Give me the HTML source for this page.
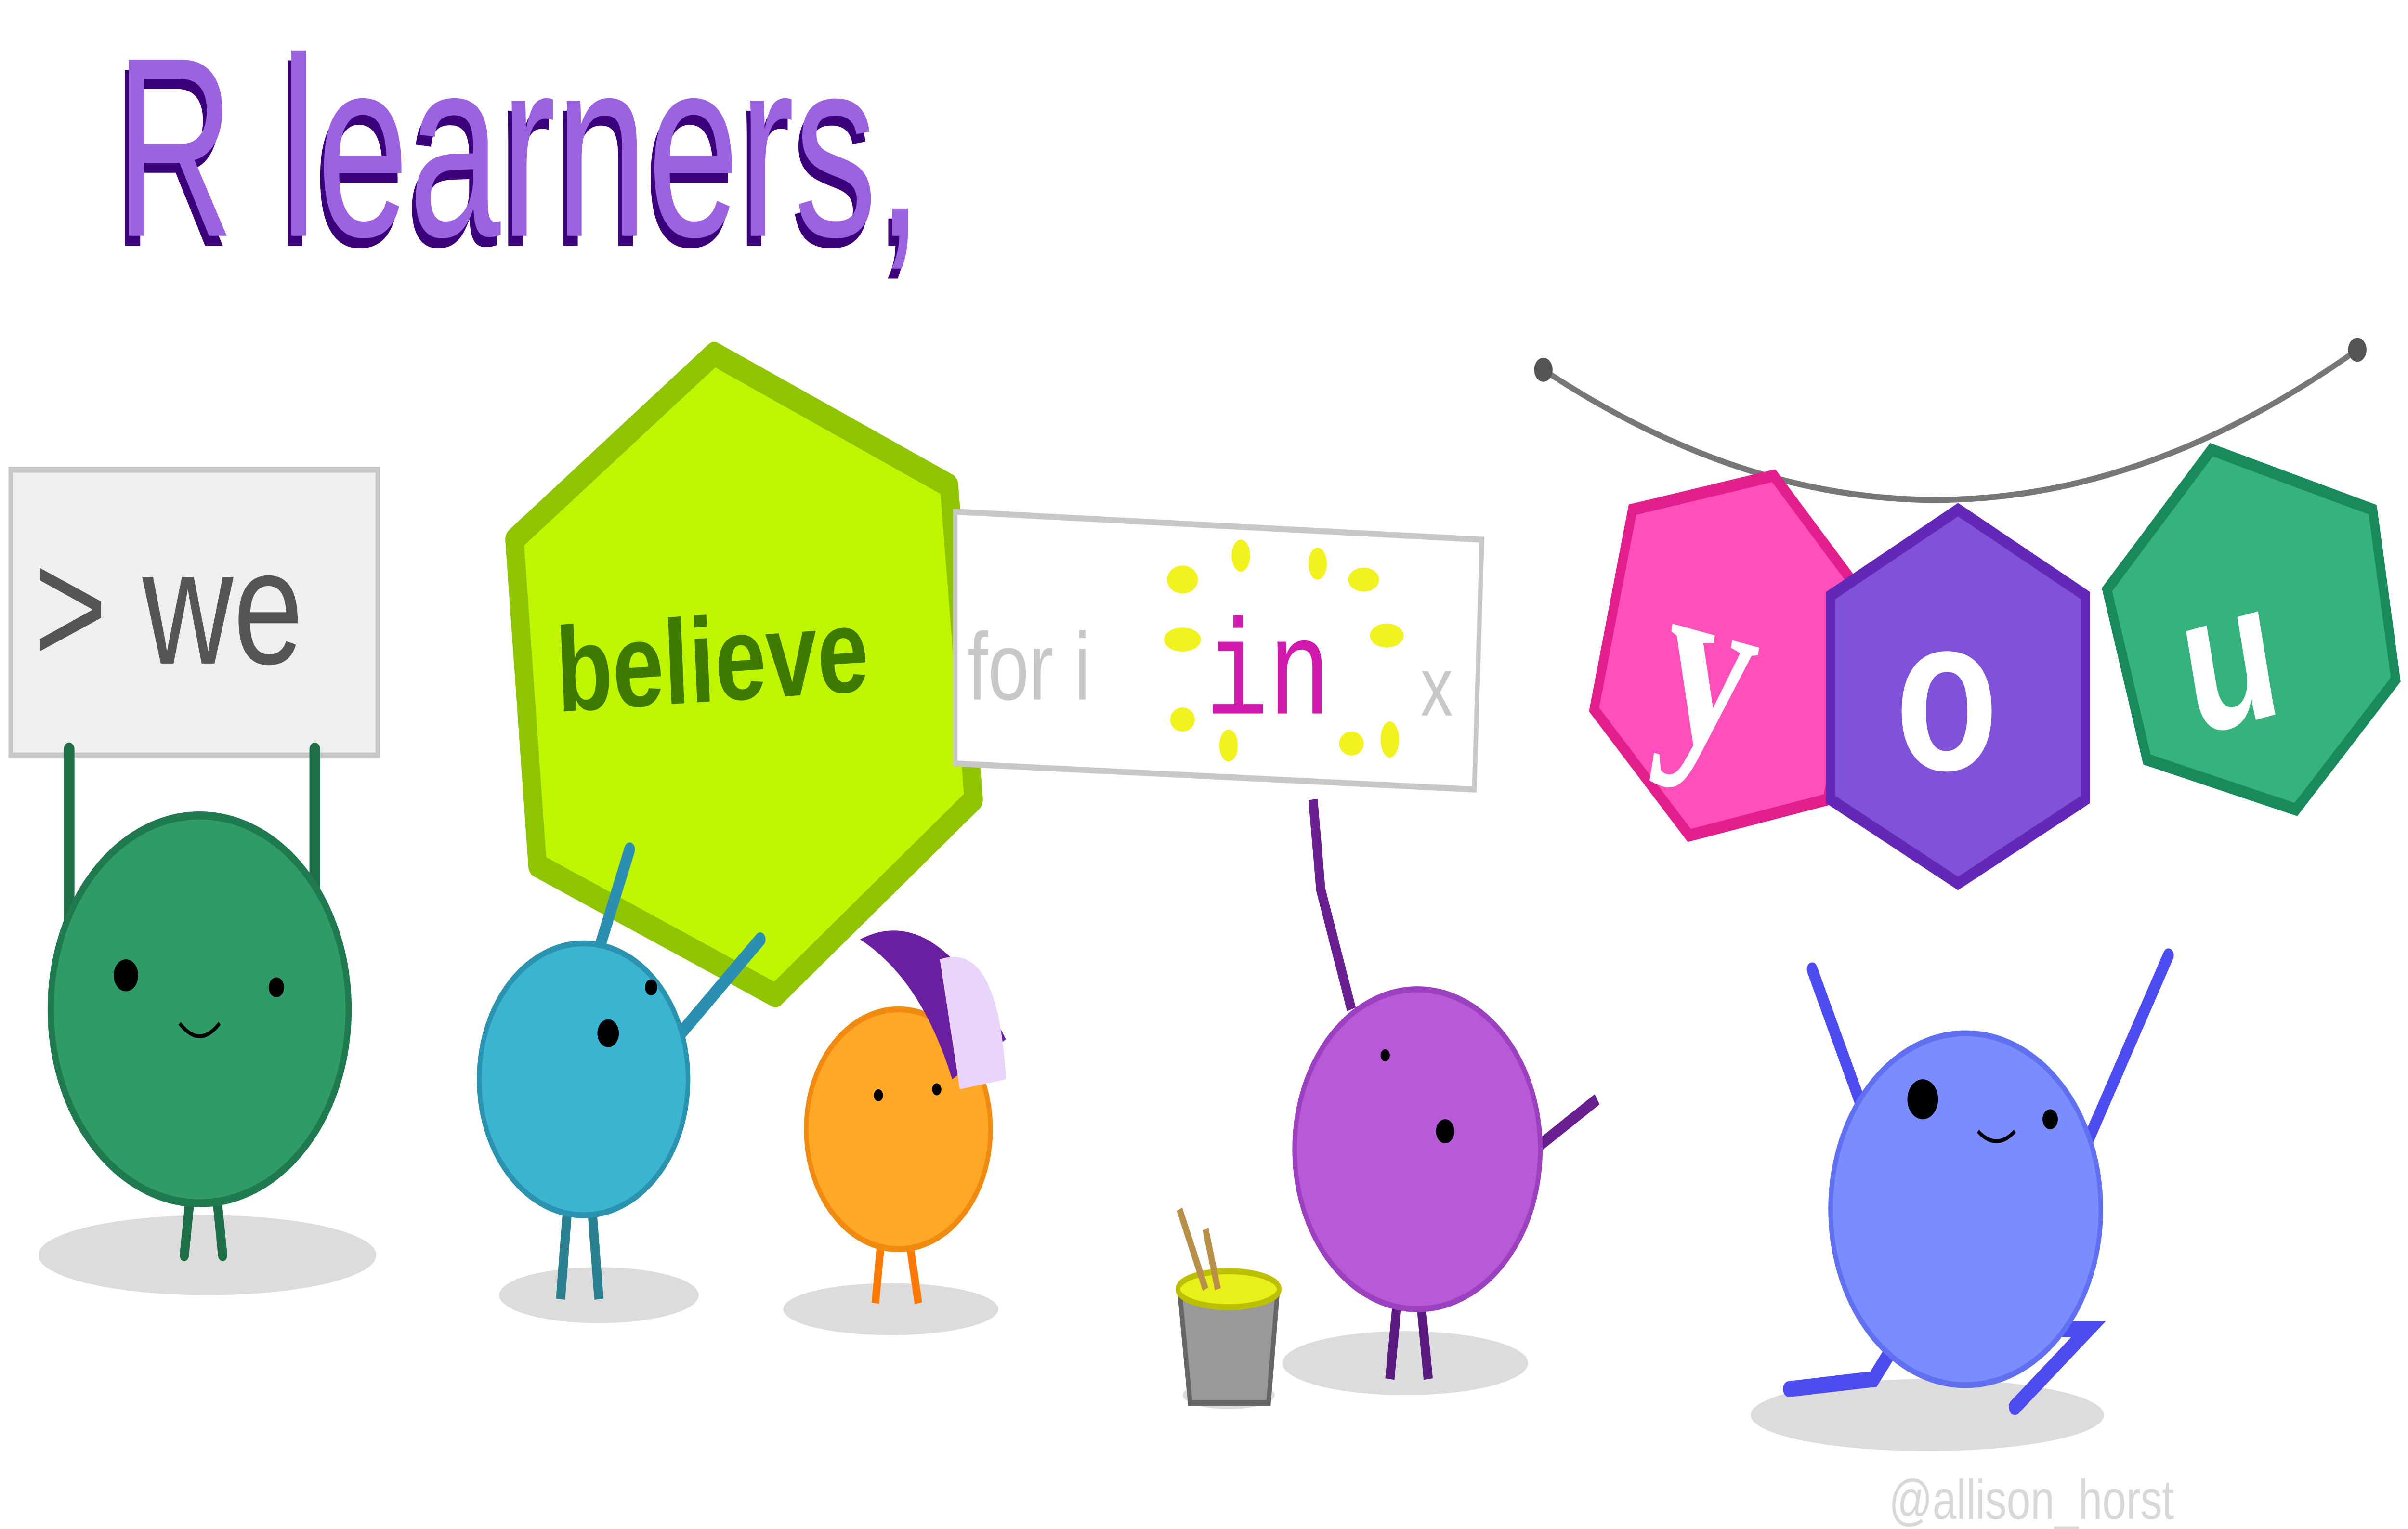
<!DOCTYPE html>
<html><head><meta charset="utf-8"><style>
html,body{margin:0;padding:0;background:#fff;width:100%;height:100%;overflow:hidden;}
svg{display:block;position:fixed;left:0;top:0;width:100vw;height:100vh;}
</style></head><body>
<svg viewBox="0 0 1568 765" preserveAspectRatio="none" xmlns="http://www.w3.org/2000/svg" font-family="Liberation Sans, sans-serif">
<rect width="1568" height="765" fill="#fff"/>
<!-- title -->
<g font-size="128" transform="translate(75,118) scale(0.84,1)">
<text x="-3" y="5" fill="#3c007a">R learners,</text>
<text x="0" y="0" fill="#9b63df">R learners,</text>
</g>
<!-- shadows -->
<g fill="#dcdcdc">
<ellipse cx="135" cy="628" rx="110" ry="20"/>
<ellipse cx="390" cy="648" rx="65" ry="14"/>
<ellipse cx="580" cy="655" rx="70" ry="13"/>
<ellipse cx="915" cy="682" rx="80" ry="16"/>
<ellipse cx="800" cy="698" rx="30" ry="7"/>
<ellipse cx="1255" cy="708" rx="115" ry="18"/>
</g>
<!-- we sign -->
<rect x="7" y="235" width="239" height="143" fill="#efefef" stroke="#c8c8c8" stroke-width="3"/>
<text x="22" y="332" font-size="82" fill="#555">&gt; we</text>
<!-- green monster -->
<path d="M45 375 L45 460 M205 375 L205 460" stroke="#1e6e48" stroke-width="7" stroke-linecap="round"/>
<path d="M125 590 L120 628 M140 590 L145 628" stroke="#1e6e48" stroke-width="6" stroke-linecap="round"/>
<circle cx="130" cy="505" r="97" fill="#2f9c68" stroke="#1f7a4f" stroke-width="4"/>
<circle cx="82" cy="488" r="8" fill="#000"/><circle cx="180" cy="494" r="5" fill="#000"/>
<path d="M117 512 Q130 525 143 512" stroke="#000" stroke-width="2" fill="none"/>
<!-- believe hex -->
<polygon points="465,177 618,243 634,400 505,498 350,433 335,270" fill="#c0f500" stroke="#8fc400" stroke-width="12" stroke-linejoin="round"/>
<text x="362" y="350" font-size="60" font-weight="bold" fill="#3f7a00" transform="rotate(-3 480 330)">believe</text>
<!-- for i in x sign -->
<polygon points="622,256 965,270 960,395 622,382" fill="#fff" stroke="#c8c8c8" stroke-width="3"/>
<text x="630" y="350" font-size="48" fill="#c8c8c8">for i</text>
<text x="785" y="357" font-size="68" font-family="Liberation Mono, monospace" fill="#d21aae">in</text>
<text x="925" y="358" font-size="42" fill="#c8c8c8">x</text>
<g fill="#f2f21e">
<ellipse cx="770" cy="290" rx="10" ry="7"/><ellipse cx="808" cy="278" rx="6" ry="8"/><ellipse cx="858" cy="282" rx="6" ry="8"/>
<ellipse cx="888" cy="290" rx="10" ry="6"/><ellipse cx="770" cy="320" rx="12" ry="6"/><ellipse cx="903" cy="318" rx="11" ry="6"/>
<ellipse cx="770" cy="360" rx="8" ry="6"/><ellipse cx="800" cy="373" rx="6" ry="8"/><ellipse cx="880" cy="372" rx="8" ry="6"/><ellipse cx="905" cy="370" rx="6" ry="9"/>
</g>
<!-- blue monster -->
<path d="M390 475 L410 425 M440 520 L495 470" stroke="#2a8fb0" stroke-width="7" stroke-linecap="round"/>
<path d="M370 600 L365 650 M385 600 L390 650" stroke="#2a7f90" stroke-width="6"/>
<circle cx="380" cy="540" r="68" fill="#3ab4d0" stroke="#2a93b0" stroke-width="3"/>
<circle cx="396" cy="517" r="7" fill="#000"/><circle cx="424" cy="494" r="4" fill="#000"/>
<!-- orange monster -->
<path d="M575 610 L570 652 M590 610 L598 652" stroke="#ff7a00" stroke-width="5"/>
<circle cx="585" cy="565" r="60" fill="#ffa726" stroke="#f08a10" stroke-width="3"/>
<path d="M560 470 Q610 450 655 520 L620 540 Q600 490 560 470Z" fill="#6a1fa0"/>
<path d="M612 480 Q650 470 655 540 L625 545Z" fill="#e9d4fa"/>
<circle cx="572" cy="548" r="3" fill="#000"/><circle cx="610" cy="545" r="3" fill="#000"/>
<!-- bucket -->
<path d="M768 645 L832 645 L826 702 L775 702Z" fill="#999" stroke="#666" stroke-width="3"/>
<ellipse cx="800" cy="645" rx="33" ry="9" fill="#e8f01a" stroke="#bcc000" stroke-width="3"/>
<path d="M768 605 L785 645 M785 615 L793 645" stroke="#b8904a" stroke-width="4"/>
<!-- purple monster -->
<path d="M880 505 L860 445 L855 400" stroke="#6a1f90" stroke-width="6" fill="none"/>
<path d="M975 590 L1040 550" stroke="#6a1f90" stroke-width="6"/>
<path d="M910 650 L905 690 M925 650 L930 690" stroke="#5a1a80" stroke-width="6"/>
<circle cx="923" cy="575" r="80" fill="#b85ad8" stroke="#9a40c0" stroke-width="3"/>
<circle cx="941" cy="566" r="6" fill="#000"/><circle cx="902" cy="528" r="3" fill="#000"/>
<!-- garland -->
<path d="M1005 185 Q1270 320 1535 175" stroke="#777" stroke-width="3" fill="none"/>
<circle cx="1005" cy="185" r="6" fill="#555"/><circle cx="1535" cy="175" r="6" fill="#555"/>
<polygon points="1155,238 1215,300 1190,400 1100,418 1038,355 1063,255" fill="#ff4fba" stroke="#e21f8c" stroke-width="6"/>
<text x="1085" y="375" font-size="120" font-weight="bold" fill="#fff" font-family="Liberation Serif, serif" transform="rotate(12 1125 330)">y</text>
<polygon points="1275,255 1358,298 1358,400 1275,442 1192,400 1192,298" fill="#7f52d9" stroke="#6328b8" stroke-width="6"/>
<text x="1234" y="385" font-size="110" font-weight="bold" fill="#fff">o</text>
<polygon points="1440,225 1545,255 1560,340 1495,405 1398,380 1372,295" fill="#36b37d" stroke="#188a5c" stroke-width="6"/>
<text x="1418" y="360" font-size="100" font-weight="bold" fill="#fff" transform="rotate(-12 1465 315)">u</text>
<!-- blue-purple monster -->
<path d="M1220 570 L1180 485 M1360 570 L1412 478" stroke="#4c4cf0" stroke-width="7" stroke-linecap="round"/>
<path d="M1240 665 L1220 690 L1165 695 M1315 665 L1360 665 L1312 704" stroke="#4c4cf0" stroke-width="8" fill="none" stroke-linecap="round"/>
<circle cx="1280" cy="605" r="88" fill="#7b8cff" stroke="#6070f0" stroke-width="3"/>
<circle cx="1252" cy="550" r="10" fill="#000"/><circle cx="1335" cy="560" r="5" fill="#000"/>
<path d="M1288 566 Q1300 576 1312 566" stroke="#000" stroke-width="2" fill="none"/>
<text x="1230" y="760" font-size="28" fill="#d8d8d8">@allison_horst</text>
</svg>
</body></html>
